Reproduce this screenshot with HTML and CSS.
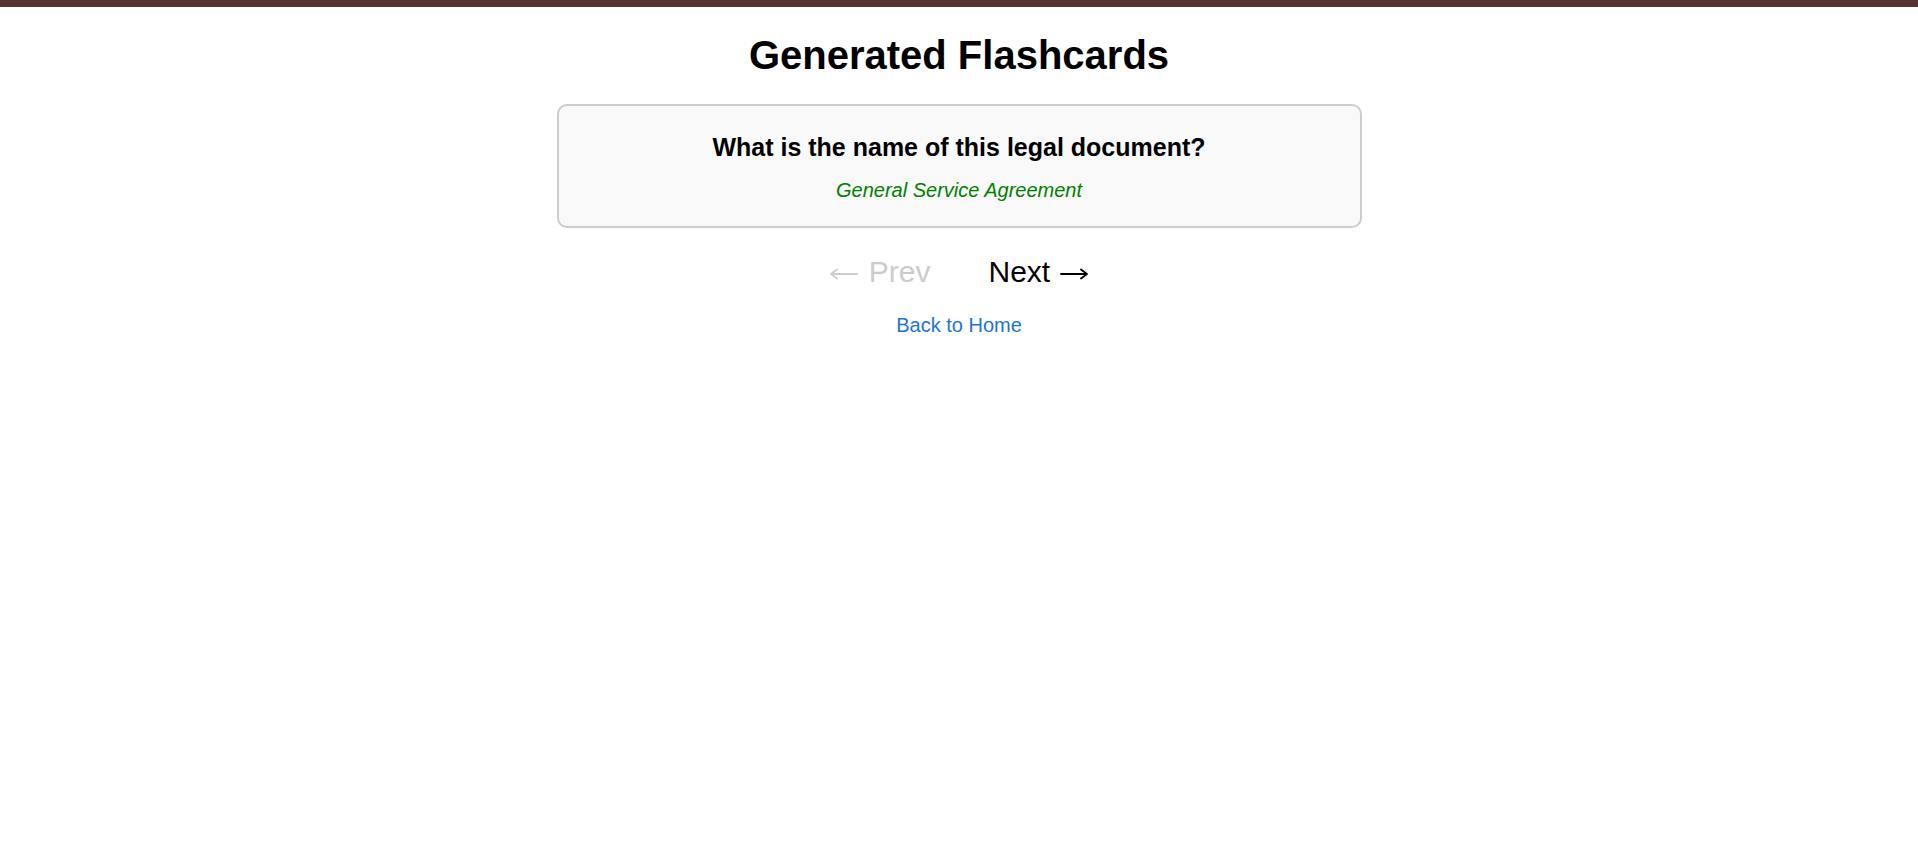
FILE: index.html
```html
<!DOCTYPE html>
<html lang="en">
<head>
<meta charset="utf-8">
<title>Generated Flashcards</title>
<link rel="stylesheet" href="styles.css">
</head>
<body>
<div class="topbar"></div>
<main class="page">
  <h1 class="title">Generated Flashcards</h1>
  <section class="card">
    <h2 class="question">What is the name of this legal document?</h2>
    <p class="answer">General Service Agreement</p>
  </section>
  <nav class="pager">
    <button class="pager-btn is-disabled" disabled><svg class="arrow arrow-left" viewBox="0 0 28 12" aria-hidden="true"><path d="M1 6H27M7 1.5L1 6l6 4.5"/></svg>Prev</button>
    <button class="pager-btn">Next<svg class="arrow arrow-right" viewBox="0 0 28 12" aria-hidden="true"><path d="M1 6H27M21 1.5L27 6l-6 4.5"/></svg></button>
  </nav>
  <a class="home-link" href="#">Back to Home</a>
</main>
</body>
</html>
```

FILE: styles.css
```css
html, body {
  margin: 0;
  padding: 0;
  background: #ffffff;
}

body {
  font-family: "Liberation Sans", Arial, sans-serif;
  color: #000;
}

.topbar {
  height: 7px;
  background: #553332;
}

.page {
  display: flex;
  flex-direction: column;
  align-items: center;
}

.title {
  margin: 26px 0 0;
  font-size: 40px;
  font-weight: bold;
  line-height: normal;
}

.card {
  box-sizing: border-box;
  width: 805px;
  margin-top: 26px;
  padding: 27px 20px 24px;
  background: #f9f9f9;
  border: 2px solid #cccccc;
  border-radius: 10px;
  text-align: center;
}

.question {
  margin: 0;
  font-size: 25px;
  font-weight: bold;
  line-height: normal;
}

.answer {
  margin: 17px 0 0;
  font-size: 20px;
  font-style: italic;
  color: #008000;
  line-height: normal;
}

.pager {
  display: flex;
  justify-content: center;
  gap: 58px;
  margin-top: 26px;
}

.pager-btn {
  font-family: "Liberation Sans", Arial, sans-serif;
  font-size: 30px;
  line-height: 35px;
  background: none;
  border: none;
  padding: 0;
  margin: 0;
  color: #000;
  cursor: pointer;
}

.arrow {
  width: 28px;
  height: 12px;
  vertical-align: 2px;
  fill: none;
  stroke: currentColor;
  stroke-width: 1.8;
  stroke-linecap: round;
  stroke-linejoin: round;
}

.arrow-left {
  margin-right: 11px;
}

.arrow-right {
  margin-left: 10px;
}

.pager-btn.is-disabled {
  color: #cccccc;
  cursor: default;
}

.home-link {
  margin-top: 25px;
  font-size: 20px;
  line-height: normal;
  color: #1c74d6;
  text-decoration: none;
}
```
